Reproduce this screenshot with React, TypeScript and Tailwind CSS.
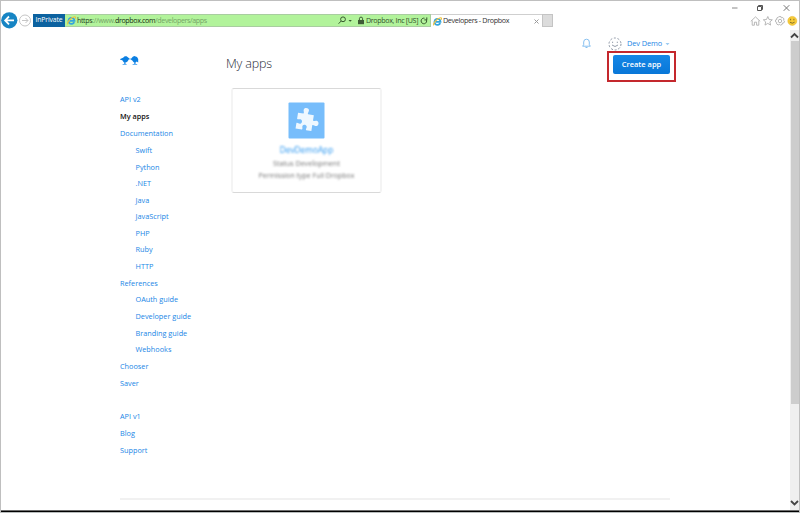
import React from "react";

const nav: { label: string; kind?: "sub" | "active" | "gap" }[] = [
  { label: "API v2" },
  { label: "My apps", kind: "active" },
  { label: "Documentation" },
  { label: "Swift", kind: "sub" },
  { label: "Python", kind: "sub" },
  { label: ".NET", kind: "sub" },
  { label: "Java", kind: "sub" },
  { label: "JavaScript", kind: "sub" },
  { label: "PHP", kind: "sub" },
  { label: "Ruby", kind: "sub" },
  { label: "HTTP", kind: "sub" },
  { label: "References" },
  { label: "OAuth guide", kind: "sub" },
  { label: "Developer guide", kind: "sub" },
  { label: "Branding guide", kind: "sub" },
  { label: "Webhooks", kind: "sub" },
  { label: "Chooser" },
  { label: "Saver" },
  { label: "API v1", kind: "gap" },
  { label: "Blog" },
  { label: "Support" },
];

function IeLogo() {
  return (
    <svg className="h-[9px] w-[9px] shrink-0" viewBox="0 0 18 18" fill="none">
      <path d="M14.5 12.2A6 6 0 1 1 15 9.6H5.5" stroke="#36a5dc" strokeWidth="3.6" />
      <path d="M2 16.5C-1 14 8 2.500 15 1.500c3-.2 2 2.500 1.200 4" stroke="#f0c23c" strokeWidth="2.400" />
    </svg>
  );
}

function BrowserBar() {
  return (
    <header className="flex h-[29px] shrink-0 items-start text-[#333]">
      <div className="flex h-[29px] items-start pt-[11px]">
        <svg className="h-[17px] w-[17px]" viewBox="0 0 17 17" fill="none">
          <circle cx="8.300" cy="8.300" r="8.100" fill="#1785c4" />
          <path d="M13 8.400H4.500M8 4.500L4.200 8.400L8 12.300" stroke="#fff" strokeWidth="1.800" />
        </svg>
        <svg className="ml-px h-[17px] w-[13px]" viewBox="0 0 13 17" fill="none" stroke="#c6c6c6" strokeWidth="1">
          <circle cx="6" cy="8.500" r="5.500" />
          <path d="M3 8.500h6M6.500 6L9 8.500L6.500 11" />
        </svg>
      </div>
      <div className="mt-[13px] ml-px flex h-[13px] w-[398px] items-center border border-[#a9cda0] bg-[#b2f39b]">
        <span className="-ml-px flex h-[13px] w-[32px] shrink-0 items-center justify-center bg-[#0c62a0] text-[6.800px] tracking-[-0.100px] text-white">InPrivate</span>
        <span className="ml-[2px] flex">
          <IeLogo />
        </span>
        <span className="ml-[1px] text-[7.100px] tracking-[-0.380px] whitespace-pre text-[#74a467]">
          <span className="text-[#26401e]">https</span>://www.<span className="text-[#152b10]">dropbox.com</span>/developers/apps
        </span>
        <svg className="ml-auto h-[9px] w-[15px] shrink-0" viewBox="0 0 15 9" fill="none" stroke="#37592d" strokeWidth="1">
          <circle cx="5" cy="3.300" r="2.400" />
          <path d="M3.200 5L.6 7.700" />
          <path d="M10.500 4h3.400l-1.700 1.700z" fill="#37592d" stroke="none" />
        </svg>
        <svg className="ml-[5px] h-[9px] w-[6px] shrink-0" viewBox="0 0 6 9" fill="none">
          <path d="M1.400 4V2.700a1.600 1.600 0 0 1 3.200 0V4" stroke="#3f5c36" />
          <path d="M0 4h6v4.200H0z" fill="#3f5c36" />
        </svg>
        <span className="ml-[2px] w-[53px] shrink-0 text-[7.100px] tracking-[-0.340px] whitespace-nowrap text-[#33502b]">Dropbox, Inc [US]</span>
        <svg className="mr-[2px] ml-px h-[8px] w-[8px] shrink-0" viewBox="0 0 8 8" fill="none" stroke="#37592d">
          <path d="M6.400 2.700A2.800 2.800 0 1 1 4.500 1.200M4.300 2.900H6.800V.4" />
        </svg>
      </div>
      <div className="mt-[13px] flex h-[13px] w-[111px] items-center border-t border-[#cfcfcf] pl-[2px]">
        <IeLogo />
        <span className="ml-px text-[7.200px] tracking-[-0.350px] whitespace-nowrap text-[#333]">Developers - Dropbox</span>
        <svg className="mr-[3px] ml-auto h-[5px] w-[5px]" viewBox="0 0 5 5" stroke="#999">
          <path d="M.5.500l4 4M4.500.500l-4 4" />
        </svg>
      </div>
      <div className="mt-[13px] h-[13px] w-[11px] border border-[#c4c4c4] bg-[#dcdcdc]" />
      <div className="ml-auto flex w-[70px] flex-col">
        <svg className="h-[13px] w-[70px]" viewBox="729 1 70 13" fill="none" stroke="#555">
          <path d="M732 8h5.500" stroke="#888" />
          <path d="M757.500 6.500h4v4h-4zM758.500 6V5.500h4v4h-.6" />
          <path d="M783.700 5.200l5.600 5.600M789.300 5.200l-5.600 5.600" stroke="#777" />
        </svg>
        <svg className="h-[14px] w-[70px]" viewBox="729 14 70 14" fill="none" stroke="#b0b0b0" strokeWidth=".9">
          <path d="M750.800 21.300l4.700-4.400 4.700 4.400M752.200 20.500v4.700h2.200v-3h2.200v3h2.200v-4.700" />
          <path d="M767.800 16.500l1.300 3 3.200.3-2.400 2.100.7 3.200-2.800-1.700-2.800 1.700.7-3.200-2.400-2.100 3.200-.3z" />
          <circle cx="780" cy="21" r="1.700" />
          <path d="M779 16.600h2l.4 1.300 1.400-.4 1.300 1.500-.7 1.200 1.100.9-.6 1.800-1.400.1-.3 1.400-1.800.8-1-1-1.200.8-1.600-1.100.2-1.400-1.300-.7.100-1.900 1.300-.5-.1-1.400 1.600-.9z" />
          <circle cx="792.300" cy="20.900" r="4.500" fill="#f7cb38" stroke="#e3b326" strokeWidth=".5" />
          <path d="M790.600 18.800v1.500M793.900 18.800v1.500M789.900 22.200q2.400 2 4.700 0" stroke="#665a28" strokeWidth=".8" />
        </svg>
      </div>
    </header>
  );
}

function Sidebar() {
  return (
    <aside className="w-[105px] shrink-0 pt-[25px]">
      <svg className="h-[12px] w-[20px]" viewBox="0 0 20 12" fill="#0b7fe2">
        <path d="M.2 4L3 2.800 4.800 1.200h1.800L9.400 3.600 7.500 6.500 6.300 7.200H3.700L2.300 5.300.2 4.800z" />
        <path d="M11 3.700L12.800 1.800 14.300 1.100 17 1.900 18.200 4v3.600L16.700 6.400 15.800 7.200H13.600L12.300 5.500 11 4.700z" />
        <path d="M9 4h2.200" stroke="#7cbdf2" strokeWidth="1.200" />
        <path d="M4.900 6.500v2.500M14.900 6.500v2.500" stroke="#0b7fe2" strokeWidth="1.200" />
        <path d="M2.600 9.500h4M12.600 9.500h4.600" stroke="#58aaf0" strokeWidth=".9" />
      </svg>
      <nav className="mt-[24.450px] flex flex-col text-[7.300px] text-[#1a86e6]">
        {nav.map((n) => (
          <a
            key={n.label}
            className={
              n.kind === "sub"
                ? "flex h-[16.550px] items-center pl-[15.500px] whitespace-nowrap"
                : n.kind === "active"
                  ? "flex h-[17px] items-center font-semibold text-[#111]"
                  : n.kind === "gap"
                    ? "mt-[15.900px] flex h-[17px] items-center"
                    : "flex h-[17px] items-center"
            }
          >
            {n.label}
          </a>
        ))}
      </nav>
    </aside>
  );
}

function AppCard() {
  return (
    <div className="mt-[14px] ml-[6px] flex h-[105px] w-[151px] flex-col items-center rounded-[3px] border border-x-2 border-x-[#f4f4f4] border-y-[#d9d9d9] pt-[13px]">
      <svg className="h-[37px] w-[37px] shrink-0 blur-[0.700px]" viewBox="0 0 37 37">
        <rect x=".5" y=".5" width="36" height="36" rx="1" fill="#77bdfb" />
        <g transform="rotate(9 18 18)">
          <path
            d="M9 12h5.500c1-1-.8-2.300-.3-4.300.6-2.300 4.600-2.300 5.200 0 .4 2-1.200 3.300-.3 4.300H25v5.500c1 1 2.200-.8 4.200-.3 2.300.6 2.300 4.600 0 5.200-2 .4-3.200-1.300-4.200-.3V28h-5.300c-1-1 .6-2.200 0-3.700-.7-1.700-3.600-1.700-4.200 0-.5 1.500 1 2.700 0 3.700H9v-5.500c1-1 2.500.6 4 0 1.700-.7 1.700-3.700 0-4.300-1.500-.5-3 1-4 0z"
            fill="#eff8ff"
          />
        </g>
      </svg>
      <div className="mt-[4px] h-[13px] text-[8.300px] leading-[13px] text-[#2a96f0] blur-[1.200px]">DevDemoApp</div>
      <div className="mt-px h-[12px] text-[7.100px] leading-[12px] text-[#777] blur-[1.300px]">Status Development</div>
      <div className="mt-px h-[12px] text-[7px] leading-[12px] text-[#777] blur-[1.300px]">Permission type Full Dropbox</div>
    </div>
  );
}

function Account() {
  return (
    <div className="-mr-[6px] flex w-[102px] flex-col">
      <div className="flex h-[21px] shrink-0 items-center pt-[6px]">
        <svg className="ml-[8px] h-[11px] w-[9px] shrink-0" viewBox="0 0 9 11" fill="none" stroke="#79b9ee" strokeWidth=".9">
          <path d="M.6 8.200h7.800L7.300 6.800V4a2.800 2.800 0 0 0-5.600 0v2.800zM3.500 9.500h2" />
        </svg>
        <svg className="ml-[17px] h-[14px] w-[14px] shrink-0" viewBox="0 0 14 14" fill="none" stroke="#8a94a3">
          <circle cx="7" cy="7" r="6" strokeWidth="1" strokeDasharray="2 1.770" />
          <path d="M4.600 4.700v1.300M9.300 4.700v1.300M4 8q3 3 6 0" strokeWidth=".9" />
        </svg>
        <span className="ml-[5px] text-[7.400px] tracking-[-0.100px] whitespace-nowrap text-[#1a86e6]">Dev Demo</span>
        <svg className="ml-[3px] h-[4px] w-[5px] shrink-0" viewBox="0 0 5 4">
          <path d="M.5 1h4L2.500 3.300z" fill="#9ccbf2" />
        </svg>
      </div>
      <div className="ml-[33px] flex h-[31px] w-[69px] shrink-0 items-start border-2 border-[#c4282d] pt-[2px] pl-[4px]">
        <button className="h-[19px] w-[57px] rounded-[2px] bg-gradient-to-b from-[#1587e6] to-[#0877d8] text-[7.500px] font-semibold text-white">Create app</button>
      </div>
    </div>
  );
}

export default function App() {
  return (
    <div className="flex h-[513px] w-[800px] flex-col overflow-hidden border border-b-0 border-[#bfbfbf] bg-white font-['Open_Sans','Noto_Sans',sans-serif] leading-none">
      <BrowserBar />
      <div className="flex h-[480px] shrink-0">
        <main className="flex w-[789px] flex-col pl-[119px]">
          <div className="flex h-[468px] w-[550px]">
            <Sidebar />
            <section className="flex-1">
              <div className="flex h-[44px] justify-between">
                <h1 className="mt-[25px] ml-px h-[18px] text-[12.500px] leading-[18px] font-light tracking-[-0.180px] text-[#1f2a36]">My apps</h1>
                <Account />
              </div>
              <AppCard />
            </section>
          </div>
          <hr className="h-[2px] w-[550px] border-0 bg-[#f1f1f1]" />
        </main>
        <div className="flex w-[9px] flex-col bg-[#efefef]">
          <svg className="h-[11px] w-[9px] shrink-0" viewBox="0 0 9 11" fill="none" stroke="#444" strokeWidth="1.800">
            <path d="M1 7.500L4.500 4L8 7.500" />
          </svg>
          <div className="h-[363px] w-[8px] self-end bg-[#cdcdcd]" />
          <svg className="mt-auto h-[11px] w-[9px] shrink-0" viewBox="0 0 9 11" fill="none" stroke="#444" strokeWidth="1.800">
            <path d="M1 2L4.500 5.500L8 2" />
          </svg>
        </div>
      </div>
      <div className="h-[2px] shrink-0 border-t border-[#6d6d6d] bg-black" />
      <div className="h-px shrink-0 bg-[#b9bdbd]" />
    </div>
  );
}
